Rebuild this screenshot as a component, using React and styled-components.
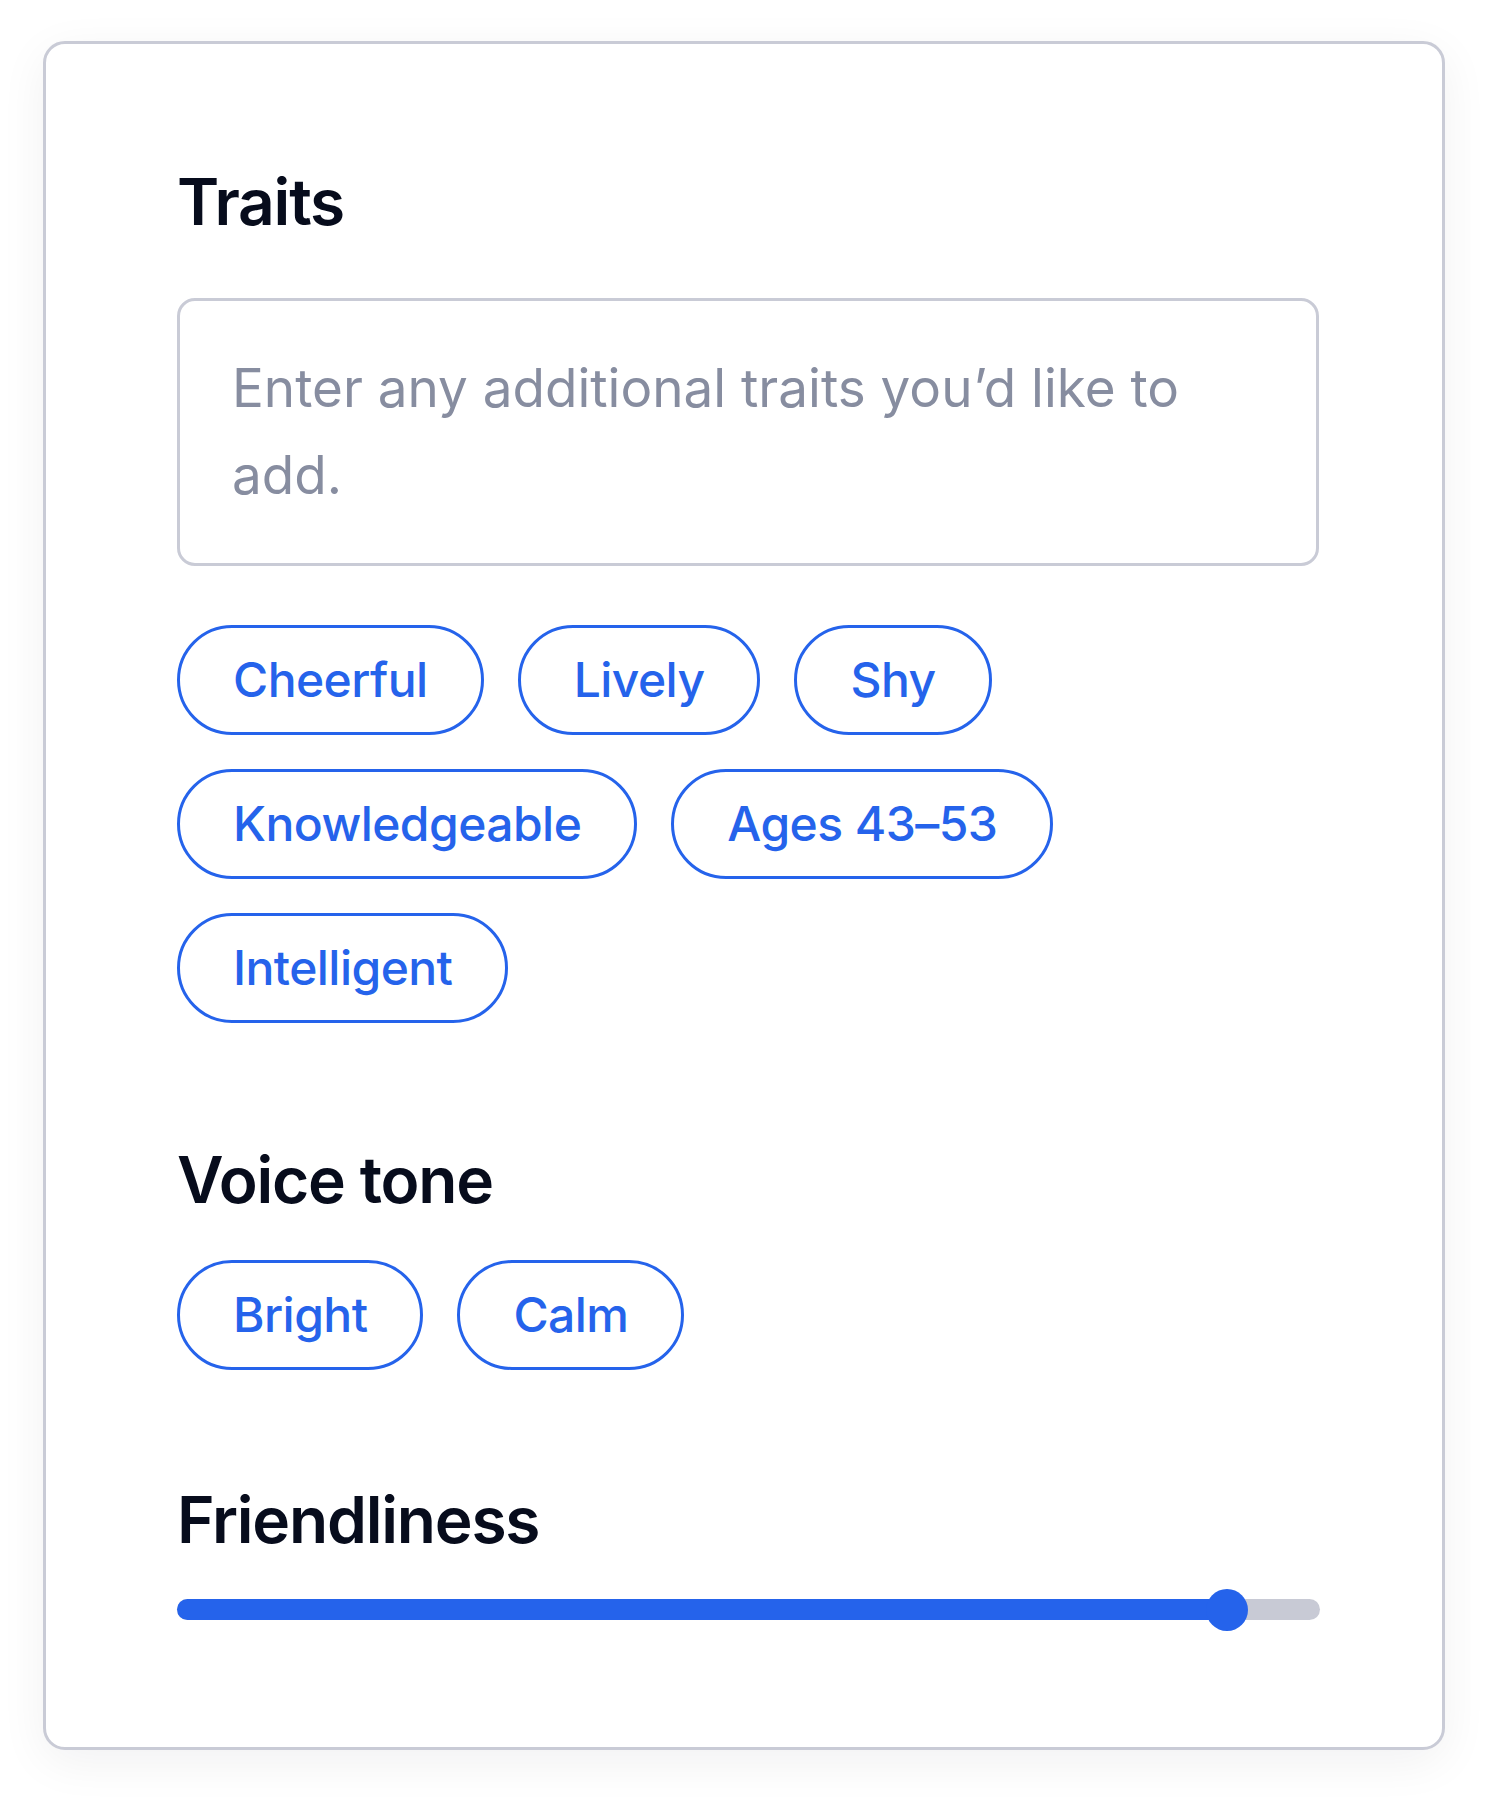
import React from "react";
import styled, { createGlobalStyle } from "styled-components";

const GlobalStyle = createGlobalStyle`
  html, body { margin: 0; padding: 0; background: #ffffff; }
  body { font-family: Inter, "Noto Sans", sans-serif; }
  * { box-sizing: border-box; }
`;

const Page = styled.div`
  padding: 41px 0 60px 43px;
`;

const Card = styled.section`
  width: 1402px;
  height: 1709px;
  border: 3px solid #c9cbd6;
  border-radius: 22px;
  background: #ffffff;
  box-shadow: 0 12px 48px rgba(20, 24, 40, 0.06);
  padding: 119px 125px 0 131px;
  display: flex;
  flex-direction: column;
`;

const Heading = styled.h2`
  margin: ${(p) => p.$top || 0}px 0 ${(p) => p.$bottom || 0}px;
  font-family: Inter, "Noto Sans", sans-serif;
  font-size: 64px;
  line-height: 77px;
  font-weight: 600;
  letter-spacing: -1.2px;
  color: #070c1c;
`;

const TraitsInput = styled.textarea`
  display: block;
  width: 1142px;
  height: 268px;
  margin: 0 0 59px;
  padding: 44px 52px;
  border: 3px solid #c9cbd6;
  border-radius: 18px;
  resize: none;
  outline: none;
  overflow: hidden;
  font-family: Inter, "Noto Sans", sans-serif;
  font-size: 53px;
  line-height: 87px;
  color: #070c1c;
  background: #fff;
  &::placeholder {
    color: #878da0;
    opacity: 1;
  }
`;

const ChipGroup = styled.div`
  display: flex;
  flex-wrap: wrap;
  gap: 34px;
  width: 1142px;
`;

const Chip = styled.button`
  height: 110px;
  padding: 16px 53px;
  border: 3px solid #2563eb;
  border-radius: 999px;
  background: #ffffff;
  color: #2563eb;
  font-family: Inter, "Noto Sans", sans-serif;
  font-size: 48px;
  line-height: 72px;
  font-weight: 500;
  letter-spacing: -0.55px;
  cursor: pointer;
  white-space: nowrap;
`;

const Track = styled.div`
  position: relative;
  width: 1143px;
  height: 21px;
  border-radius: 11px;
  background: #c8cad5;
`;

const Fill = styled.div`
  height: 100%;
  border-radius: 11px;
  background: #2563eb;
`;

const Thumb = styled.div`
  position: absolute;
  top: 50%;
  width: 42px;
  height: 42px;
  margin: -21px 0 0 -21px;
  border-radius: 50%;
  background: #2563eb;
`;

const traits = ["Cheerful", "Lively", "Shy", "Knowledgeable", "Ages 43–53", "Intelligent"];
const tones = ["Bright", "Calm"];

function Slider({ value }) {
  const pct = `${value}%`;
  return (
    <Track>
      <Fill style={{ width: pct }} />
      <Thumb style={{ left: pct }} />
    </Track>
  );
}

export default function App() {
  return (
    <>
      <GlobalStyle />
      <Page>
        <Card>
          <Heading $bottom={58}>Traits</Heading>
          <TraitsInput placeholder="Enter any additional traits you’d like to add." />
          <ChipGroup>
            {traits.map((t) => (
              <Chip key={t}>{t}</Chip>
            ))}
          </ChipGroup>
          <Heading $top={118} $bottom={42}>Voice tone</Heading>
          <ChipGroup>
            {tones.map((t) => (
              <Chip key={t}>{t}</Chip>
            ))}
          </ChipGroup>
          <Heading $top={111} $bottom={41}>Friendliness</Heading>
          <Slider value={91.9} />
        </Card>
      </Page>
    </>
  );
}
